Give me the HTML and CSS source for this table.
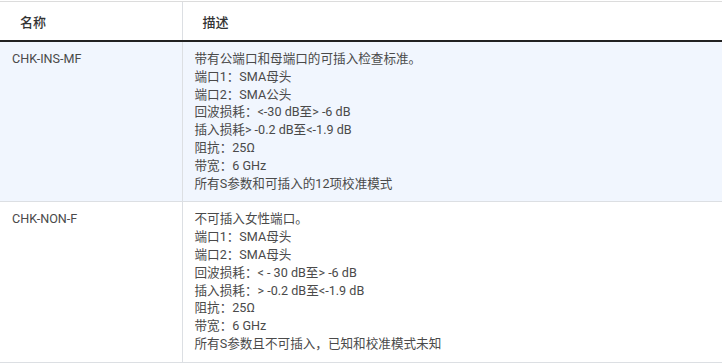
FILE: index.html
```html
<!DOCTYPE html>
<html lang="zh-CN">
<head>
<meta charset="utf-8">
<title>校准件</title>
<link rel="stylesheet" href="styles.css">
</head>
<body>
<table class="spec">
  <colgroup><col class="col-name"><col class="col-desc"></colgroup>
  <thead>
    <tr><th>名称</th><th>描述</th></tr>
  </thead>
  <tbody>
    <tr class="alt">
      <td>CHK-INS-MF</td>
      <td>带有公端口和母端口的可插入检查标准。<br>端口1：SMA母头<br>端口2：SMA公头<br>回波损耗：&lt;-30 dB至&gt; -6 dB<br>插入损耗&gt; -0.2 dB至&lt;-1.9 dB<br>阻抗：25Ω<br>带宽：6 GHz<br>所有S参数和可插入的12项校准模式</td>
    </tr>
    <tr>
      <td>CHK-NON-F</td>
      <td>不可插入女性端口。<br>端口1：SMA母头<br>端口2：SMA母头<br>回波损耗：&lt; - 30 dB至&gt; -6 dB<br>插入损耗：&gt; -0.2 dB至&lt;-1.9 dB<br>阻抗：25Ω<br>带宽：6 GHz<br>所有S参数且不可插入，已知和校准模式未知</td>
    </tr>
  </tbody>
</table>
</body>
</html>
```
FILE: styles.css
```css
html, body {
  margin: 0;
  padding: 0;
  background: #ffffff;
}
body {
  padding-top: 1px;
  font-family: Roboto, "Noto Sans CJK SC", sans-serif;
  color: #4a4a4a;
}
.spec {
  width: 100%;
  border-collapse: collapse;
  table-layout: fixed;
  font-size: 12.6px;
}
.col-name { width: 182px; }
.spec th {
  text-align: left;
  font-weight: 500;
  font-size: 13px;
  color: #333333;
  height: 38px;
  padding: 0 0 0 20px;
  vertical-align: middle;
  border-top: 1px solid #dcdcdc;
  border-bottom: 2px solid #222222;
}
.spec td {
  vertical-align: top;
  line-height: 17.8px;
  padding: 8px 12px 9px 12px;
  border-bottom: 1px solid #dcdfe3;
}
.spec th + th,
.spec td + td {
  border-left: 1px solid #dcdfe3;
}
.spec tr.alt td {
  background: #f1f6fe;
}
```
